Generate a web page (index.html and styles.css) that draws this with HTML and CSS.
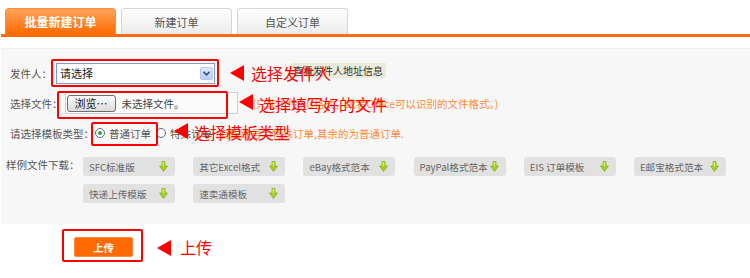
FILE: index.html
```html
<!DOCTYPE html>
<html lang="zh-CN">
<head>
<meta charset="utf-8">
<title>批量新建订单</title>
<link rel="stylesheet" href="styles.css">
</head>
<body>
<div class="tabs">
  <div class="tab active">批量新建订单</div>
  <div class="tab">新建订单</div>
  <div class="tab">自定义订单</div>
</div>
<div class="panel">
  <div class="row r1">
    <span class="label">发件人：</span>
    <div class="select">
      <span class="sel-text">请选择</span>
      <span class="drop"><svg width="7" height="5" viewBox="0 0 7 5"><path d="M0.5 0.8 L3.5 3.8 L6.5 0.8" fill="none" stroke="#3b4f7a" stroke-width="1.6"/></svg></span>
    </div>
    <div class="tooltip">查看发件人地址信息</div>
    <div class="mark box b1"></div>
    <div class="mark tri t1"></div>
    <div class="mark note n1">选择发件人</div>
  </div>
  <div class="row r2">
    <span class="label">选择文件：</span>
    <div class="file">
      <span class="browse">浏览…</span>
      <span class="nofile">未选择文件。</span>
    </div>
    <span class="hint h2">(只能上传.xls格式，或者Office可以识别的文件格式。)</span>
    <div class="mark box b2"></div>
    <div class="mark tri t2"></div>
    <div class="mark note n2">选择填写好的文件</div>
  </div>
  <div class="row r3">
    <span class="label">请选择模板类型：</span>
    <span class="radio checked"></span>
    <span class="opt">普通订单</span>
    <span class="radio second"></span>
    <span class="opt">特殊订单</span>
    <span class="hint h3">(有跟踪号为特殊订单,其余的为普通订单.</span>
    <div class="mark box b3"></div>
    <div class="mark tri t3"></div>
    <div class="mark note n3">选择模板类型</div>
  </div>
  <div class="row r4">
    <span class="label l4">样例文件下载：</span>
    <div class="dl-grid">
      <div class="dl"><span>SFC标准版</span><svg class="arr" width="9" height="11" viewBox="0 0 9 11"><path d="M3 0.5h3v4.5h2.5L4.5 10.5 0.5 5H3z" fill="#a4cf25" stroke="#86b31c" stroke-width="0.8"/><path d="M3.6 1h1.6v4.2H3.6z" fill="#d7ee5a"/></svg></div>
      <div class="dl"><span>其它Excel格式</span><svg class="arr" width="9" height="11" viewBox="0 0 9 11"><path d="M3 0.5h3v4.5h2.5L4.5 10.5 0.5 5H3z" fill="#a4cf25" stroke="#86b31c" stroke-width="0.8"/><path d="M3.6 1h1.6v4.2H3.6z" fill="#d7ee5a"/></svg></div>
      <div class="dl"><span>eBay格式范本</span><svg class="arr" width="9" height="11" viewBox="0 0 9 11"><path d="M3 0.5h3v4.5h2.5L4.5 10.5 0.5 5H3z" fill="#a4cf25" stroke="#86b31c" stroke-width="0.8"/><path d="M3.6 1h1.6v4.2H3.6z" fill="#d7ee5a"/></svg></div>
      <div class="dl"><span>PayPal格式范本</span><svg class="arr" width="9" height="11" viewBox="0 0 9 11"><path d="M3 0.5h3v4.5h2.5L4.5 10.5 0.5 5H3z" fill="#a4cf25" stroke="#86b31c" stroke-width="0.8"/><path d="M3.6 1h1.6v4.2H3.6z" fill="#d7ee5a"/></svg></div>
      <div class="dl"><span>EIS 订单模板</span><svg class="arr" width="9" height="11" viewBox="0 0 9 11"><path d="M3 0.5h3v4.5h2.5L4.5 10.5 0.5 5H3z" fill="#a4cf25" stroke="#86b31c" stroke-width="0.8"/><path d="M3.6 1h1.6v4.2H3.6z" fill="#d7ee5a"/></svg></div>
      <div class="dl"><span>E邮宝格式范本</span><svg class="arr" width="9" height="11" viewBox="0 0 9 11"><path d="M3 0.5h3v4.5h2.5L4.5 10.5 0.5 5H3z" fill="#a4cf25" stroke="#86b31c" stroke-width="0.8"/><path d="M3.6 1h1.6v4.2H3.6z" fill="#d7ee5a"/></svg></div>
      <div class="dl"><span>快递上传模版</span><svg class="arr" width="9" height="11" viewBox="0 0 9 11"><path d="M3 0.5h3v4.5h2.5L4.5 10.5 0.5 5H3z" fill="#a4cf25" stroke="#86b31c" stroke-width="0.8"/><path d="M3.6 1h1.6v4.2H3.6z" fill="#d7ee5a"/></svg></div>
      <div class="dl"><span>速卖通模板</span><svg class="arr" width="9" height="11" viewBox="0 0 9 11"><path d="M3 0.5h3v4.5h2.5L4.5 10.5 0.5 5H3z" fill="#a4cf25" stroke="#86b31c" stroke-width="0.8"/><path d="M3.6 1h1.6v4.2H3.6z" fill="#d7ee5a"/></svg></div>
    </div>
  </div>
</div>
<div class="upload-row">
  <span class="upload">上传</span>
  <div class="mark box b4"></div>
  <div class="mark tri t4"></div>
  <div class="mark note n4">上传</div>
</div>
</body>
</html>
```

FILE: styles.css
```css
* { box-sizing: border-box; }
html, body { margin: 0; padding: 0; background: #fff; }
body {
  width: 750px;
  height: 278px;
  overflow: hidden;
  font-family: "Noto Sans CJK SC", "Noto Sans", sans-serif;
  font-size: 10.5px;
  color: #555;
}

/* tabs */
.tabs {
  display: flex;
  gap: 5px;
  padding: 8px 0 0 4px;
  height: 37px;
  border-bottom: 3px solid #ff6a0c;
  margin-left: 1px;
}
.tab {
  width: 111px;
  height: 26px;
  border: 1px solid #d6d6d6;
  border-bottom: none;
  border-radius: 4px 4px 0 0;
  background: linear-gradient(#fefefe, #ececec);
  display: flex;
  align-items: center;
  justify-content: center;
  font-size: 11px;
  color: #555;
}
.tab.active {
  border-color: #ff8a3a;
  background: linear-gradient(#ffa45a, #ff6a00);
  color: #fff;
  font-weight: bold;
  font-size: 12px;
}

/* panel */
.panel {
  margin-top: 11px;
  margin-left: 1px;
  background: #f7f7f7;
  border-top: 1px solid #efefef;
  padding: 9px 0 21px 0;
}
.row {
  position: relative;
  display: flex;
  align-items: center;
  height: 30px;
  padding-left: 9px;
  white-space: nowrap;
}
.label { color: #555; }

/* select */
.select {
  margin-left: 4px;
  width: 159px;
  height: 21px;
  border: 1px solid #7f9db9;
  background: #fff;
  display: flex;
  align-items: center;
  justify-content: space-between;
  padding: 0 1px 0 3px;
}
.sel-text { color: #222; font-size: 11px; }
.drop {
  width: 13px;
  height: 13px;
  border: 1px solid #b7c8ef;
  border-radius: 2px;
  background: linear-gradient(#dfe8fd, #b9cbf6);
  display: flex;
  align-items: center;
  justify-content: center;
}
.tooltip {
  position: absolute;
  left: 289px;
  top: 5px;
  height: 15px;
  line-height: 15px;
  padding: 0 3px;
  background: #ecead9;
  color: #333;
  font-size: 10px;
}

/* file */
.file {
  margin-left: 2px;
  width: 173px;
  height: 22px;
  border: 1px solid #cfcfcf;
  background: #fbfbfb;
  display: flex;
  align-items: center;
  padding-left: 1px;
}
.browse {
  width: 49px;
  height: 17px;
  border: 1px solid #6e6e6e;
  border-radius: 3px;
  background: linear-gradient(#fbfbfb, #dcdcdc);
  color: #111;
  font-size: 11px;
  display: flex;
  align-items: center;
  justify-content: center;
}
.nofile { margin-left: 6px; color: #444; }
.hint { color: #ff8a3d; font-size: 10.5px; }
.h2 { margin-left: 15px; }
.h3 { margin-left: 4px; }

/* radios */
.radio {
  width: 10px;
  height: 10px;
  border: 1px solid #4f6f94;
  border-radius: 50%;
  background: #fff;
  display: flex;
  align-items: center;
  justify-content: center;
  margin: 0 4px 0 1px;
}
.radio.checked::after {
  content: "";
  width: 4px;
  height: 4px;
  border-radius: 50%;
  background: #2fa53a;
}
.radio.second { margin-left: 5px; }
.opt { color: #555; }

/* downloads */
.r4 {
  height: auto;
  align-items: flex-start;
  padding-left: 5px;
  margin-top: 9px;
}
.l4 { line-height: 15px; width: 77px; flex: none; }
.dl-grid {
  display: grid;
  grid-template-columns: repeat(6, 92px);
  column-gap: 18.2px;
  row-gap: 8px;
}
.dl {
  height: 19px;
  border-radius: 3px;
  background: #e1e1e1;
  color: #666;
  font-size: 9.6px;
  display: flex;
  align-items: center;
  justify-content: space-between;
  padding: 0 7px 0 6px;
}
.arr { display: block; flex: none; margin-left: 2px; }

/* upload */
.upload-row {
  position: relative;
  padding: 13px 0 0 74px;
}
.upload {
  display: flex;
  align-items: center;
  justify-content: center;
  width: 59px;
  height: 20px;
  border: 1px solid #ff8c42;
  border-radius: 2px;
  background: #ff6a05;
  color: #fff;
  font-weight: bold;
  font-size: 10.5px;
}

/* annotations overlay */
.mark { position: absolute; }
.box { border: 2px solid #f00; border-radius: 2px; }
.tri {
  width: 0;
  height: 0;
  border-top: 8px solid transparent;
  border-bottom: 8px solid transparent;
  border-right: 14px solid #f00;
}
.note {
  color: #f00;
  font-size: 16px;
  line-height: 20px;
  white-space: nowrap;
}
.b1 { left: 50px; top: 1px; width: 168px; height: 28px; }
.t1 { left: 229px; top: 7px; }
.n1 { left: 250px; top: 5px; }

.b2 { left: 56px; top: 3px; width: 171px; height: 28px; }
.t2 { left: 238px; top: 6px; }
.n2 { left: 258px; top: 6px; }

.b3 { left: 90px; top: 4px; width: 67px; height: 24px; }
.t3 { left: 173px; top: 5px; }
.n3 { left: 193px; top: 4px; }

.b4 { left: 62px; top: 5px; width: 81px; height: 33px; }
.t4 { left: 157px; top: 16px; }
.n4 { left: 180px; top: 13px; }
```
